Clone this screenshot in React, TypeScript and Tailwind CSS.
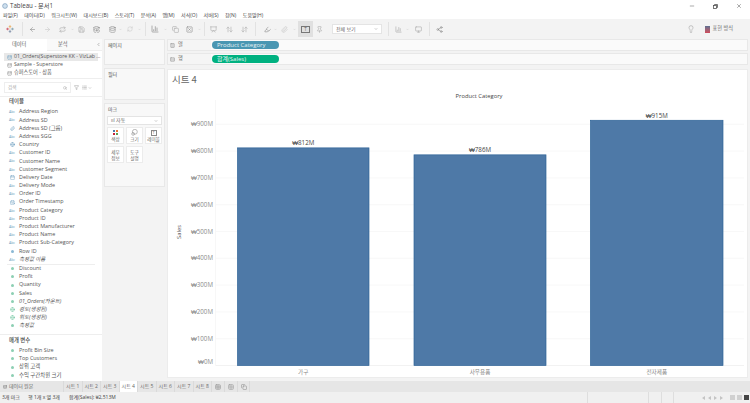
import React from 'react';
import {
  ArrowLeft,
  ArrowRight,
  Repeat,
  Save,
  DatabaseBackup,
  Database,
  RefreshCw,
  ChartColumn,
  Copy,
  SquareX,
  ArrowDownUp,
  ArrowUpDown,
  Highlighter,
  Paperclip,
  Pin,
  Monitor,
  Presentation,
  Share2,
  Filter,
  Search,
  List,
  Globe,
  Calendar,
  CalendarClock,
  Lightbulb,
  ChevronLeft,
  ChevronDown,
  Minus,
  X,
  Table,
  Grid2x2,
  Rows3,
  Columns3,
} from 'lucide-react';

const sans = "font-['Open_Sans','Noto_Sans_CJK_KR',sans-serif]";

const menus = ['파일(F)', '데이터(D)', '워크시트(W)', '대시보드(B)', '스토리(T)', '분석(A)', '맵(M)', '서식(O)', '서버(S)', '창(N)', '도움말(H)'];

const AbcIcon = () => <span className="w-[8px] text-[3.6px] leading-none text-[#6a9fc0] text-center">Abc</span>;
const Dot = ({ green }: { green?: boolean }) => (
  <span className="w-[8px] flex justify-center">
    <span className={`w-[3px] h-[3px] rounded-full ${green ? 'bg-[#8ccfb3]' : 'bg-[#8ab8d4]'}`} />
  </span>
);
const GlyphWrap = ({ children }: { children: React.ReactNode }) => <span className="w-[8px] flex justify-center">{children}</span>;

type Field = { name: string; icon: React.ReactNode; italic?: boolean };

const dims: Field[] = [
  { name: 'Address Region', icon: <AbcIcon /> },
  { name: 'Address SD', icon: <AbcIcon /> },
  { name: 'Address SD (그룹)', icon: <GlyphWrap><Paperclip size={5} className="text-[#6a9fc0]" /></GlyphWrap> },
  { name: 'Address SGG', icon: <AbcIcon /> },
  { name: 'Country', icon: <GlyphWrap><Globe size={5} className="text-[#6a9fc0]" /></GlyphWrap> },
  { name: 'Customer ID', icon: <AbcIcon /> },
  { name: 'Customer Name', icon: <AbcIcon /> },
  { name: 'Customer Segment', icon: <AbcIcon /> },
  { name: 'Delivery Date', icon: <GlyphWrap><Calendar size={5} className="text-[#6a9fc0]" /></GlyphWrap> },
  { name: 'Delivery Mode', icon: <AbcIcon /> },
  { name: 'Order ID', icon: <AbcIcon /> },
  { name: 'Order Timestamp', icon: <GlyphWrap><CalendarClock size={5} className="text-[#6a9fc0]" /></GlyphWrap> },
  { name: 'Product Category', icon: <AbcIcon /> },
  { name: 'Product ID', icon: <AbcIcon /> },
  { name: 'Product Manufacturer', icon: <AbcIcon /> },
  { name: 'Product Name', icon: <AbcIcon /> },
  { name: 'Product Sub-Category', icon: <AbcIcon /> },
  { name: 'Row ID', icon: <Dot /> },
  { name: '측정값 이름', icon: <AbcIcon />, italic: true },
];

const measures: Field[] = [
  { name: 'Discount', icon: <Dot green /> },
  { name: 'Profit', icon: <Dot green /> },
  { name: 'Quantity', icon: <Dot green /> },
  { name: 'Sales', icon: <Dot green /> },
  { name: '01_Orders(카운트)', icon: <Dot green />, italic: true },
  { name: '경도(생성됨)', icon: <GlyphWrap><Globe size={5} className="text-[#6fc4a0]" /></GlyphWrap>, italic: true },
  { name: '위도(생성됨)', icon: <GlyphWrap><Globe size={5} className="text-[#6fc4a0]" /></GlyphWrap>, italic: true },
  { name: '측정값', icon: <Dot green />, italic: true },
];

const params: Field[] = [
  { name: 'Profit Bin Size', icon: <Dot green /> },
  { name: 'Top Customers', icon: <Dot green /> },
  { name: '상위 고객', icon: <Dot green /> },
  { name: '수익 구간차원 크기', icon: <Dot green /> },
];

const FieldRow = ({ f }: { f: Field }) => (
  <div className={`h-[8.2px] flex items-center pl-[8px] gap-[3px] text-[5.4px] leading-none text-[#555] whitespace-nowrap ${f.italic ? 'italic' : ''}`}>
    {f.icon}
    <span>{f.name}</span>
  </div>
);

const Dark = 'text-[#8a8a8a]';
const Gray = 'text-[#a8a8a8]';
const Faint = 'text-[#c8c8c8]';
const caret = <ChevronDown size={3} className={Gray} />;

const toolbar: { w: string; node?: React.ReactNode; sep?: boolean; active?: boolean }[] = [
  {
    w: 'w-[20px]',
    node: (
      <svg width="8" height="8" viewBox="0 0 10 10">
        <path d="M5 0v4M3.4 2h3.2" stroke="#e8962c" strokeWidth="0.7" />
        <path d="M5 6v4M3.4 8h3.2" stroke="#5b6f91" strokeWidth="0.7" />
        <path d="M0 5h4M2 3.4v3.2" stroke="#c72035" strokeWidth="0.7" />
        <path d="M6 5h4M8 3.4v3.2" stroke="#59879b" strokeWidth="0.7" />
      </svg>
    ),
  },
  { w: 'w-[5px]', sep: true },
  { w: 'w-[14px]', node: <ArrowLeft size={7} className={Dark} /> },
  { w: 'w-[16px]', node: <ArrowRight size={7} className={Faint} /> },
  { w: 'w-[14px]', node: <Repeat size={7} className={Gray} /> },
  { w: 'w-[6px]', node: caret },
  { w: 'w-[12px]', node: <Save size={7} className={Gray} /> },
  { w: 'w-[19px]', node: <DatabaseBackup size={7} className={Dark} /> },
  { w: 'w-[12px]', node: <Database size={7} className={Dark} /> },
  { w: 'w-[5px]', node: caret },
  { w: 'w-[14px]', node: <RefreshCw size={6} className={Faint} /> },
  { w: 'w-[4px]', node: caret },
  { w: 'w-[8px]', sep: true },
  { w: 'w-[12px]', node: <ChartColumn size={8} className={Dark} /> },
  { w: 'w-[8px]', node: caret },
  { w: 'w-[12px]', node: <Copy size={7} className={Gray} /> },
  { w: 'w-[16px]', node: <SquareX size={7} className={Dark} /> },
  { w: 'w-[4px]', node: caret },
  { w: 'w-[6px]', sep: true },
  { w: 'w-[12px]', node: <Presentation size={7} className={Gray} /> },
  { w: 'w-[20px]', node: <ArrowUpDown size={7} className={Gray} /> },
  { w: 'w-[10px]', node: <ArrowDownUp size={7} className={Gray} /> },
  { w: 'w-[13px]', sep: true },
  { w: 'w-[10px]', node: <Highlighter size={7} className={Dark} /> },
  { w: 'w-[6px]', node: caret },
  { w: 'w-[12px]', node: <Paperclip size={7} className={Faint} /> },
  { w: 'w-[8px]', node: caret },
  {
    w: 'w-[15px]',
    active: true,
    node: (
      <span className="w-[9px] h-[7px] border border-[#777] flex items-center justify-center text-[4.5px] leading-none text-[#666]">T</span>
    ),
  },
  { w: 'w-[12px]', node: <Pin size={7} className={Gray} /> },
];

const toolbarEnd: { w: string; node?: React.ReactNode; sep?: boolean }[] = [
  { w: 'w-[6px]', sep: true },
  { w: 'w-[14px]', node: <ChartColumn size={7} className={Gray} /> },
  { w: 'w-[4px]', node: caret },
  { w: 'w-[18px]', node: <Monitor size={7} className={Gray} /> },
  { w: 'w-[4px]', sep: true },
  { w: 'w-[16px]', node: <Share2 size={7} className={Dark} /> },
];

const ToolCell = ({ w, node, sep, active }: { w: string; node?: React.ReactNode; sep?: boolean; active?: boolean }) => (
  <div className={`${w} h-[16px] shrink-0 flex items-center justify-center ${active ? 'bg-[#e0e0e0]' : ''}`}>
    {sep ? <div className="w-px h-[14px] bg-[#e2e2e2]" /> : node}
  </div>
);

const MarkBtn = ({ children, label }: { children?: React.ReactNode; label: string }) => (
  <div className="h-[17px] bg-white border border-[#ececec] flex flex-col items-center justify-center text-[4.6px] leading-[6px] text-[#666] text-center">
    {children}
    <span className="whitespace-pre">{label}</span>
  </div>
);

const Shelf = ({ label, icon, pill, color }: { label: string; icon: React.ReactNode; pill: string; color: string }) => (
  <div className="h-[12px] flex items-stretch bg-[#fafafa] border border-[#e8e8e8]">
    <div className="w-[43px] bg-[#f5f5f5] flex items-center gap-[3px] pl-[2px] text-[5.2px] text-[#666] leading-none">
      {icon}
      <span>{label}</span>
    </div>
    <div className="flex items-center pl-[1px]">
      <div className={`w-[67px] h-[8.6px] rounded-full ${color} text-[#e4f2f4] text-[6px] leading-none flex items-center pl-[5px] whitespace-nowrap`}>{pill}</div>
    </div>
  </div>
);

const ticks = [900, 800, 700, 600, 500, 400, 300, 200, 100, 0];
const Y0 = 295.5; // zero line inside the svg
const PER100 = 26.8;
const bars = [
  { x: 69.5, w: 131.5, v: 812, label: '₩812M', cat: '가구' },
  { x: 246, w: 132, v: 786, label: '₩786M', cat: '사무용품' },
  { x: 422.5, w: 132.5, v: 915, label: '₩915M', cat: '전자제품' },
];

const Chart = () => (
  <svg width="581" height="309" viewBox="0 0 581 309" className="block">
    <text x="4" y="13" fontSize="9.5" fill="#666" fontFamily="'Noto Sans CJK KR', sans-serif">시트 4</text>
    <text x="311" y="28" fontSize="5.8" fill="#444" textAnchor="middle" fontFamily="'Open Sans', sans-serif">Product Category</text>
    <line x1="47.5" y1="30" x2="47.5" y2="296" stroke="#f2f2f2" strokeWidth="0.6" />
    {ticks.map(t => {
      const y = Y0 - (t / 100) * PER100;
      return (
        <g key={t}>
          <line x1="48" x2="576" y1={y} y2={y} stroke={t === 0 ? '#ececec' : '#f5f5f5'} strokeWidth="0.7" />
          {/* the lowest label sits above its line, as tableau keeps it inside the pane */}
          <text x="45" y={t === 0 ? y - 2 : y + 2} fontSize="6.2" fill="#8a8a8a" textAnchor="end" fontFamily="'Open Sans', sans-serif">₩{t}M</text>
        </g>
      );
    })}
    <text transform="translate(13 162) rotate(-90)" fontSize="5.8" fill="#555" textAnchor="middle" fontFamily="'Open Sans', sans-serif">Sales</text>
    {bars.map(b => {
      const h = (b.v / 100) * PER100;
      return (
        <g key={b.cat}>
          <rect x={b.x} y={Y0 - h} width={b.w} height={h} fill="#4e79a7" stroke="#2f6498" strokeWidth="0.7" />
          <text x={b.x + b.w / 2} y={Y0 - h - 2.5} fontSize="6.2" fill="#444" textAnchor="middle" fontFamily="'Open Sans', sans-serif">{b.label}</text>
          <text x={b.x + b.w / 2} y={Y0 + 8} fontSize="5.6" fill="#888" textAnchor="middle" fontFamily="'Noto Sans CJK KR', sans-serif">{b.cat}</text>
        </g>
      );
    })}
  </svg>
);

const sheetTabs = ['시트 1', '시트 2', '시트 3', '시트 4', '시트 5', '시트 6', '시트 7', '시트 8'];

const Tri = ({ flip }: { flip?: boolean }) => (
  <svg width="3" height="4" viewBox="0 0 3 4" className={flip ? 'rotate-180' : ''}>
    <path d="M3 0v4L0 2z" fill="#c4c4c4" />
  </svg>
);

export default function App() {
  return (
    <div className={`${sans} w-[750px] h-[403px] overflow-hidden bg-[#f3f3f3] flex flex-col`}>
      {/* title bar */}
      <div className="h-[12px] bg-white flex items-center pl-[2px] pr-[8px] text-[6.2px] leading-none text-[#444]">
        <svg width="6" height="6" viewBox="0 0 10 10" className="mr-[2px]">
          <circle cx="5" cy="5" r="4" fill="#cfe0ee" stroke="#6f93b5" />
        </svg>
        <span>Tableau - 문서1</span>
        <div className="ml-auto flex items-center gap-[18px] text-[#555]">
          <Minus size={6} />
          <svg width="5" height="5" viewBox="0 0 10 10" fill="none" stroke="#555" strokeWidth="1.6">
            <rect x="1" y="3" width="6" height="6" />
            <path d="M3 3V1h6v6H7" />
          </svg>
          <X size={6} />
        </div>
      </div>
      {/* menu */}
      <div className="h-[7px] bg-white flex items-center gap-[6.5px] pl-[3px] text-[5px] leading-none text-[#444] whitespace-nowrap">
        {menus.map(m => (
          <span key={m}>{m}</span>
        ))}
      </div>
      {/* toolbar */}
      <div className="h-[20px] bg-[#f3f3f3] flex items-center">
        {toolbar.map((t, i) => (
          <ToolCell key={i} {...t} />
        ))}
        <div className="ml-[7px] mr-[3px] w-[50px] h-[10px] bg-white border border-[#e4e4e4] flex items-center justify-between px-[3px] text-[5px] leading-none text-[#666] shrink-0">
          <span>전체 보기</span>
          <ChevronDown size={4} />
        </div>
        {toolbarEnd.map((t, i) => (
          <ToolCell key={i} {...t} />
        ))}
        <div className="ml-auto flex items-center pr-[17px] text-[5.2px] leading-none text-[#666]">
          <Lightbulb size={8} className="text-[#aaa] mr-[10px]" />
          <span className="w-[5px] h-[7px] bg-gradient-to-b from-[#5b6f91] to-[#d0495a] mr-[3px]" />
          <span>표현 방식</span>
        </div>
      </div>

      {/* main */}
      <div className="flex-1 flex min-h-0">
        {/* data pane */}
        <div className="w-[102px] shrink-0 bg-white flex flex-col overflow-hidden">
          <div className="h-[12px] flex text-[5.2px] leading-none text-[#555] bg-[#f9f9f9]">
            <div className="w-[47px] bg-white flex items-center pl-[12px]">데이터</div>
            <div className="flex-1 flex items-center pl-[11px] border-b border-[#eee]">
              <span>분석</span>
              <ChevronLeft size={5} className="ml-auto mr-[1px] text-[#666]" />
            </div>
          </div>
          <div className="h-[28px] pt-[2px] px-[4px] text-[5.2px] leading-none text-[#555] border-b border-[#eee] whitespace-nowrap overflow-hidden">
            <div className="h-[8px] bg-[#e8e8e8] flex items-center gap-[2px] pl-[3px]">
              <Database size={5} className="text-[#6a9fc0] shrink-0" />
              <span>01_Orders(Superstore KK - VizLab ...</span>
            </div>
            <div className="h-[8px] flex items-center gap-[2px] pl-[3px]">
              <Database size={5} className="text-[#888] shrink-0" />
              <span>Sample - Superstore</span>
            </div>
            <div className="h-[8px] flex items-center gap-[2px] pl-[3px]">
              <Database size={5} className="text-[#888] shrink-0" />
              <span>슈퍼스토어 - 상품</span>
            </div>
          </div>
          <div className="h-[18px] flex items-center px-[4px] border-b border-[#eee]">
            <div className="w-[67px] h-[11px] border border-[#eee] flex items-center justify-between px-[3px] text-[4.6px] leading-none text-[#aaa]">
              <span>검색</span>
              <Search size={4} className="text-[#888]" />
            </div>
            <Filter size={5} className="ml-[3px] text-[#888]" />
            <List size={5} className="ml-[3px] text-[#888]" />
            <ChevronDown size={4} className="ml-[1px] text-[#888]" />
          </div>
          <div className="h-[10px] flex items-center pl-[9px] text-[5.4px] font-medium leading-none text-[#444]">테이블</div>
          <div className="pt-[1px]">
            {dims.map(f => (
              <FieldRow key={f.name} f={f} />
            ))}
          </div>
          <div className="mx-[7px] border-t border-[#eee]" />
          <div>
            {measures.map(f => (
              <FieldRow key={f.name} f={f} />
            ))}
          </div>
          <div className="mt-[4px] border-t border-[#eee]" />
          <div className="h-[11px] flex items-center pl-[9px] text-[5.4px] font-medium leading-none text-[#444]">매개 변수</div>
          <div className="pt-[0.5px]">
            {params.map(f => (
              <FieldRow key={f.name} f={f} />
            ))}
          </div>
        </div>

        {/* cards */}
        <div className="w-[65px] shrink-0 pl-[2px] pr-[2px] flex flex-col gap-[3px] text-[5px] leading-none text-[#555]">
          <div className="h-[26px] bg-[#f8f8f8] border border-[#e8e8e8] p-[3px]">페이지</div>
          <div className="h-[32px] bg-[#f8f8f8] border border-[#e8e8e8] p-[3px]">필터</div>
          <div className="h-[84px] bg-[#f8f8f8] border border-[#e8e8e8] px-[2px] pt-[3px]">
            <div className="pl-[1px]">마크</div>
            <div className="mt-[4px] h-[9px] bg-white border border-[#e4e4e4] flex items-center justify-between px-[3px] text-[#666]">
              <span>ııl 자동</span>
              <ChevronDown size={4} />
            </div>
            <div className="mt-[2px] grid grid-cols-3 gap-[2px]">
              <MarkBtn label="색상">
                <span className="grid grid-cols-2 gap-[1px] mb-[1px]">
                  <span className="w-[2px] h-[2px] bg-[#4e79a7]" />
                  <span className="w-[2px] h-[2px] bg-[#e8762c]" />
                  <span className="w-[2px] h-[2px] bg-[#c72035]" />
                  <span className="w-[2px] h-[2px] bg-[#59a14f]" />
                </span>
              </MarkBtn>
              <MarkBtn label="크기">
                <svg width="7" height="7" viewBox="0 0 10 10" fill="none" stroke="#888" strokeWidth="0.8">
                  <circle cx="5.5" cy="4" r="3.5" />
                  <circle cx="3" cy="7" r="2" />
                </svg>
              </MarkBtn>
              <MarkBtn label="레이블">
                <span className="w-[6px] h-[6px] border border-[#888] flex items-center justify-center text-[4px] leading-none">T</span>
              </MarkBtn>
              <MarkBtn label={'세부\n정보'} />
              <MarkBtn label={'도구\n설명'} />
            </div>
          </div>
        </div>

        {/* worksheet */}
        <div className="flex-1 min-w-0 pr-[2px] flex flex-col gap-[2px]">
          <Shelf label="열" icon={<Columns3 size={5} className="text-[#888]" />} pill="Product Category" color="bg-[#4996b2]" />
          <Shelf label="행" icon={<Rows3 size={5} className="text-[#888]" />} pill="합계(Sales)" color="bg-[#00b180]" />
          <div className="h-[309px] mt-[2px] bg-white border border-[#ececec] overflow-hidden">
            <Chart />
          </div>
        </div>
      </div>

      {/* sheet tabs */}
      <div className="h-[11px] bg-[#e6e6e6] flex items-stretch text-[5px] leading-none text-[#666] whitespace-nowrap">
        <div className="w-[63px] flex items-center gap-[2px] pl-[3px]">
          <Database size={4} />
          <span>데이터 원본</span>
        </div>
        {sheetTabs.map(s => (
          <div key={s} className={`w-[18.5px] flex items-center justify-center border-l border-[#dadada] ${s === '시트 4' ? 'bg-white' : ''}`}>
            {s}
          </div>
        ))}
        <div className="w-[13px] flex items-center justify-center border-l border-[#dadada]"><Table size={6} className="text-[#888]" /></div>
        <div className="w-[13px] flex items-center justify-center border-l border-[#dadada]"><Grid2x2 size={6} className="text-[#888]" /></div>
        <div className="w-[13px] flex items-center justify-center border-x border-[#dadada]"><Copy size={6} className="text-[#888]" /></div>
      </div>

      {/* status bar */}
      <div className="h-[11px] bg-[#f0f0f0] flex items-center text-[5px] leading-none text-[#444] whitespace-nowrap">
        <span className="w-[26px] pl-[2px]">3개 마크</span>
        <span className="w-[41px] pl-[2px]">행 1개 x 열 3개</span>
        <span className="w-[520px] pl-[2px]">합계(Sales): ₩2,513M</span>
        <div className="w-[61px] h-full border-l border-[#dedede]" />
        <div className="w-[13px] h-full border-l border-[#dedede]" />
        <div className="w-[12px] h-full border-l border-[#dedede]" />
        <div className="h-full border-l border-[#dedede] flex-1 flex items-center justify-end pr-[1px] gap-[2px]">
          <div className="flex items-center gap-[3px] mr-[5px]">
            <Tri />
            <Tri />
            <Tri flip />
            <Tri flip />
          </div>
          <span className="w-[5px] h-[5px] bg-[#d0d0d0]" />
          <span className="w-[5px] h-[5px] bg-[#d0d0d0]" />
          <span className="w-[5px] h-[5px] bg-[#444]" />
        </div>
      </div>
    </div>
  );
}
